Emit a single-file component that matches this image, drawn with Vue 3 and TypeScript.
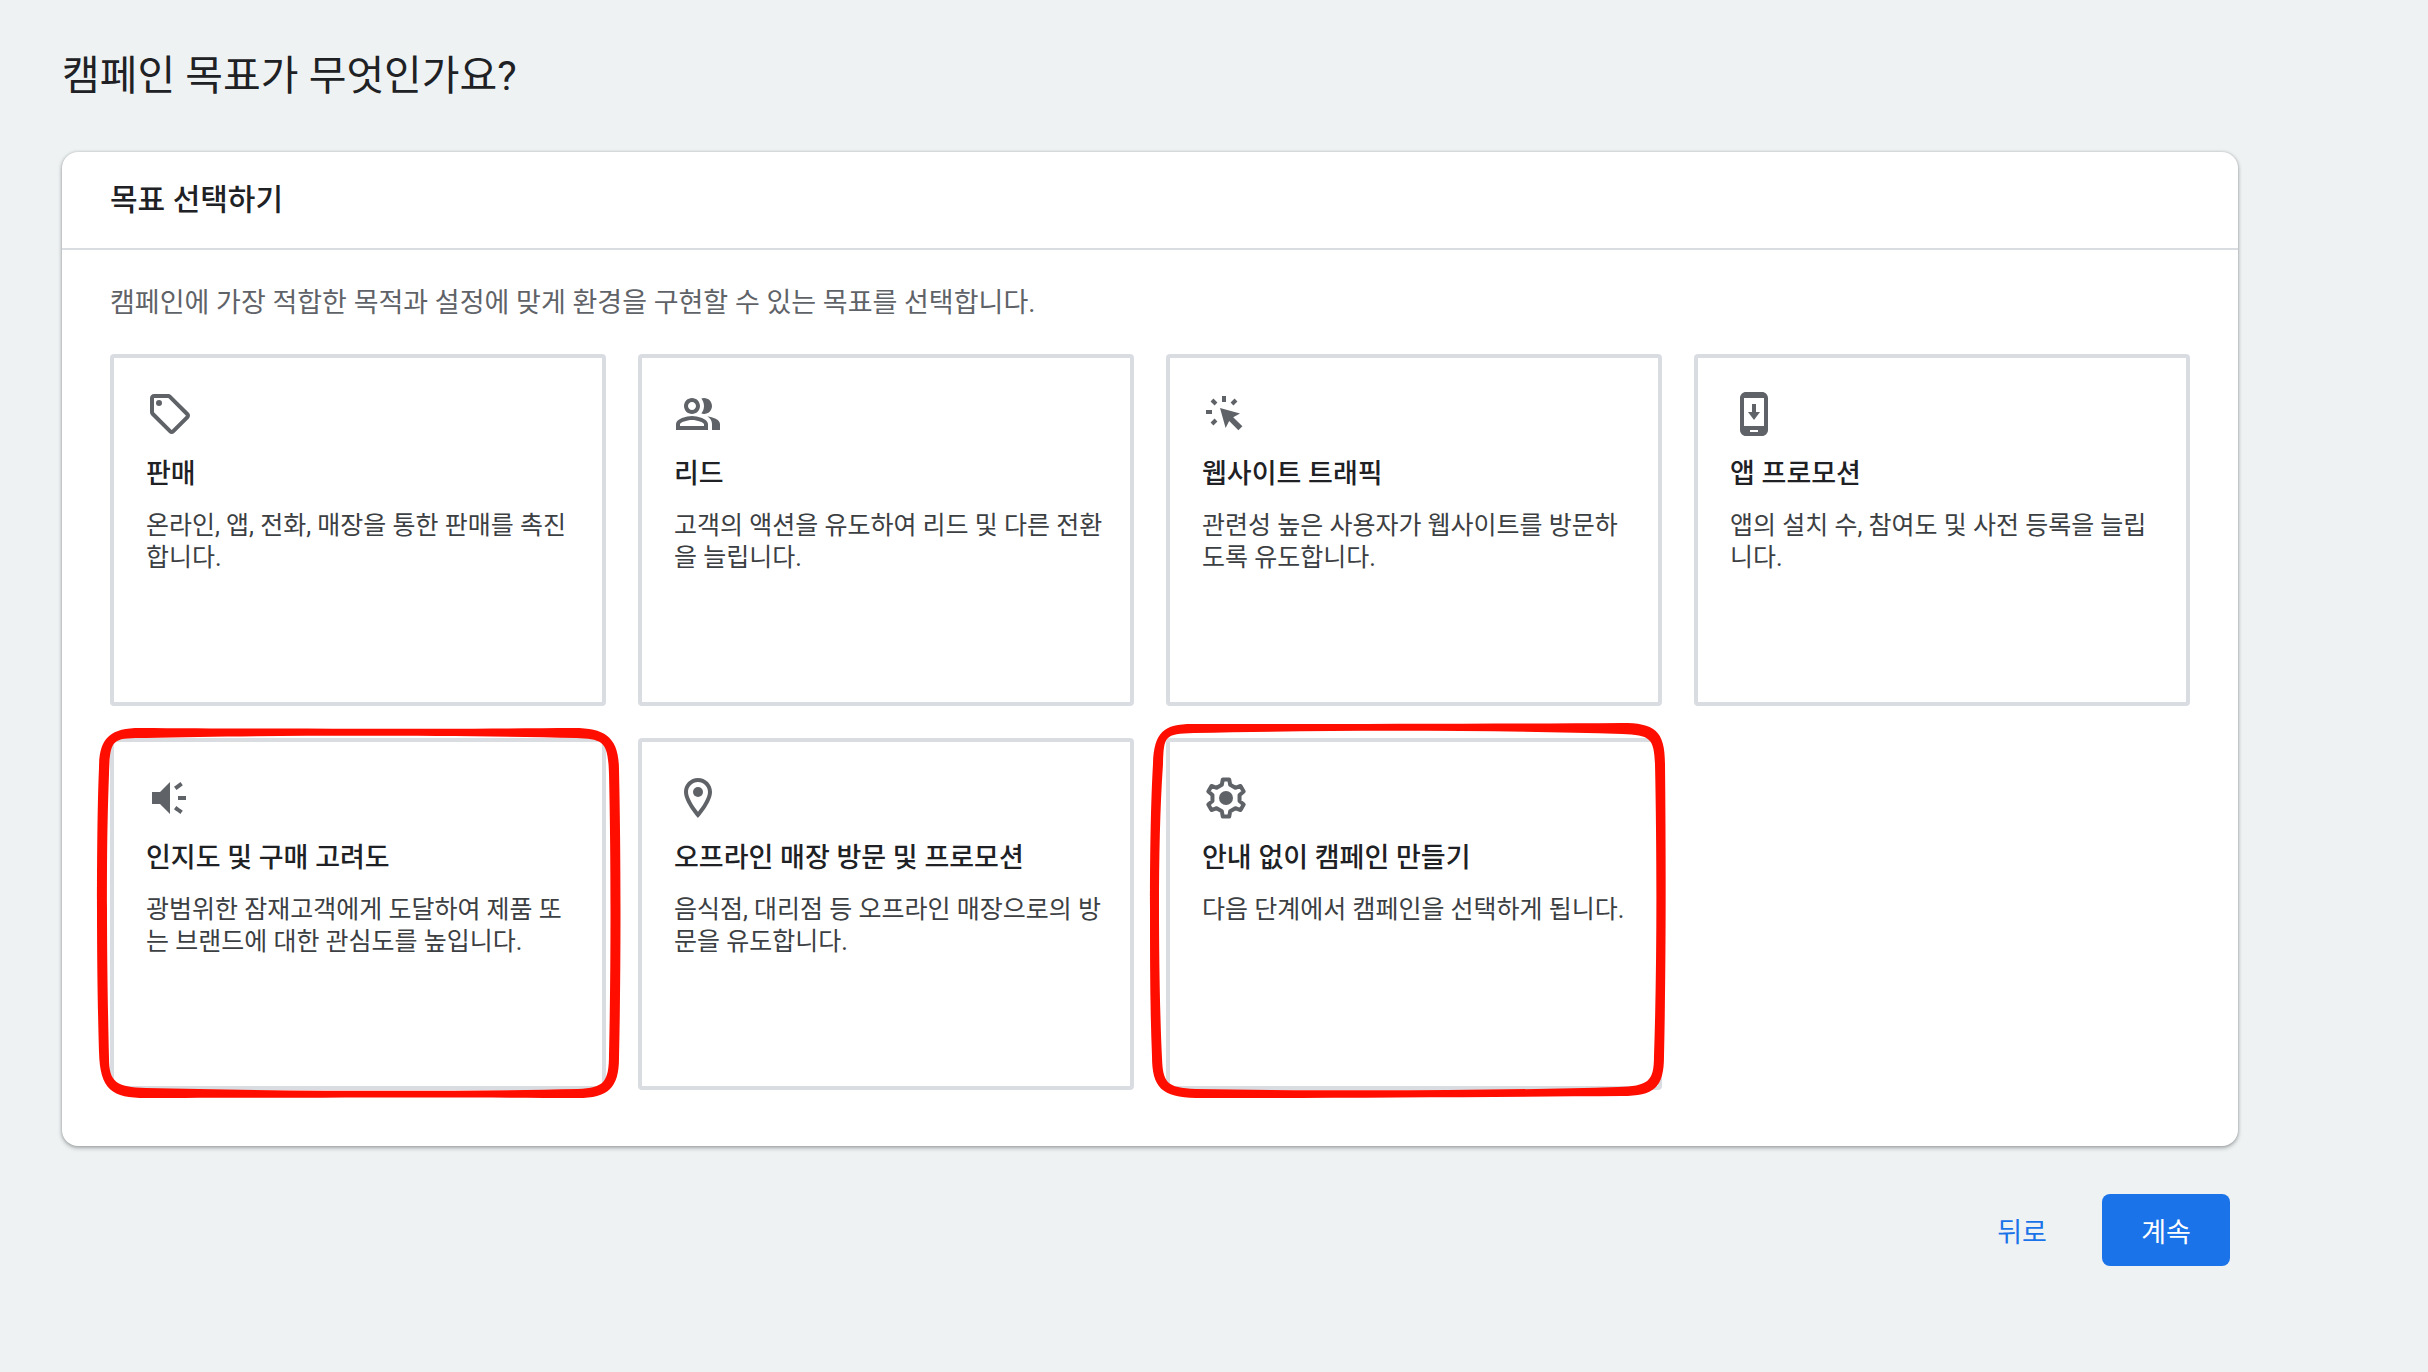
<script setup lang="ts">
import { ref } from 'vue'

interface Goal {
  id: string
  title: string
  description: string
  icon: string
  mark?: string
}

// Hand-drawn marker frames, laid over the recommended goals.
const awarenessMark =
  'M7 190C7 120 8 70 9 50C9 20 20 10 50 10C180 11 360 11 484 10C516 10 529 20 529 52C531 140 531 250 529 340C529 370 518 380 488 380C360 379 180 380 56 380C22 380 10 372 9 334C8 300 7 250 7 190Z' +
  'M17 190C17 240 18 300 19 340C19 364 26 369 56 370C180 373 360 374 488 371C514 370 519 364 519 336C521 250 521 140 519 56C518 24 514 21 486 20C360 17 180 17 56 20C22 20 20 20 19 56C17 110 17 150 17 190Z'
const unguidedMark =
  'M4 190C4 130 5 80 7 46C8 14 18 6 46 6C180 6 350 6 476 5C508 5 519 12 519 46C520 140 520 250 518 338C518 370 508 378 476 378C340 379 180 380 50 380C16 379 6 370 6 338C4 290 4 240 4 190Z' +
  'M13 190C13 240 14 300 16 340C17 364 20 370 50 371C180 373 340 373 472 369C502 368 508 364 508 338C511 250 511 140 509 46C508 20 504 17 476 16C350 12 180 12 48 15C18 16 18 18 17 46C14 90 13 140 13 190Z'

const goals: Goal[] = [
  { id: 'sales', title: '판매', description: '온라인, 앱, 전화, 매장을 통한 판매를 촉진합니다.', icon: 'tag' },
  { id: 'leads', title: '리드', description: '고객의 액션을 유도하여 리드 및 다른 전환을 늘립니다.', icon: 'people' },
  { id: 'traffic', title: '웹사이트 트래픽', description: '관련성 높은 사용자가 웹사이트를 방문하도록 유도합니다.', icon: 'click' },
  { id: 'app', title: '앱 프로모션', description: '앱의 설치 수, 참여도 및 사전 등록을 늘립니다.', icon: 'phone' },
  { id: 'awareness', title: '인지도 및 구매 고려도', description: '광범위한 잠재고객에게 도달하여 제품 또는 브랜드에 대한 관심도를 높입니다.', icon: 'speaker', mark: awarenessMark },
  { id: 'local', title: '오프라인 매장 방문 및 프로모션', description: '음식점, 대리점 등 오프라인 매장으로의 방문을 유도합니다.', icon: 'pin' },
  { id: 'unguided', title: '안내 없이 캠페인 만들기', description: '다음 단계에서 캠페인을 선택하게 됩니다.', icon: 'gear', mark: unguidedMark },
]

const selected = ref<string | null>(null)
</script>

<template>
  <main class="page">
    <h1 class="page-title">캠페인 목표가 무엇인가요?</h1>

    <section class="panel" aria-labelledby="panel-title">
      <header class="panel-header">
        <h2 id="panel-title" class="panel-title">목표 선택하기</h2>
      </header>
      <div class="panel-body">
        <p class="intro">캠페인에 가장 적합한 목적과 설정에 맞게 환경을 구현할 수 있는 목표를 선택합니다.</p>
        <div class="goals">
          <button
            v-for="goal in goals"
            :key="goal.id"
            type="button"
            class="goal"
            :aria-pressed="selected === goal.id"
            @click="selected = goal.id"
          >
            <svg class="icon" viewBox="0 0 24 24" aria-hidden="true">
              <template v-if="goal.icon === 'tag'">
                <path d="M21.41 11.41l-8.83-8.83C12.21 2.21 11.7 2 11.17 2H4C2.9 2 2 2.9 2 4v7.17c0 .53.21 1.04.59 1.41l8.83 8.83c.78.78 2.05.78 2.83 0l7.17-7.17c.78-.78.78-2.04-.01-2.83zM12.83 20L4 11.17V4h7.17L20 12.83 12.83 20z" />
                <circle cx="6.5" cy="6.5" r="1.5" />
              </template>
              <template v-else-if="goal.icon === 'people'">
                <path fill-rule="evenodd" d="M9 12c2.21 0 4-1.79 4-4s-1.79-4-4-4-4 1.79-4 4 1.79 4 4 4zm0-6c1.1 0 2 .9 2 2s-.9 2-2 2-2-.9-2-2 .9-2 2-2zM9 13c-2.67 0-8 1.34-8 4v3h16v-3c0-2.66-5.33-4-8-4zm6 5H3v-.99C3.2 16.29 6.3 15 9 15s5.8 1.29 6 2v1z" />
                <path d="M15 12c2.21 0 4-1.79 4-4s-1.79-4-4-4c-.47 0-.91.1-1.33.24C14.5 5.27 15 6.58 15 8s-.5 2.73-1.33 3.76c.42.14.86.24 1.33.24zM16.67 13.13C18.04 14.06 19 15.32 19 17v3h4v-3c0-2.18-3.58-3.47-6.33-3.87z" />
              </template>
              <template v-else-if="goal.icon === 'click'">
                <path d="M9 9l10 2.8-3.4 1.8 4.6 4.5-2 2-4.6-4.6L11.8 19z" />
                <path class="line" d="M11 3v3M2 11h3M5 5l2 2M17 5l-2 2M5 17l2-2" />
              </template>
              <template v-else-if="goal.icon === 'phone'">
                <path fill-rule="evenodd" d="M8 1h8c1.66 0 3 1.34 3 3v16c0 1.66-1.34 3-3 3H8c-1.66 0-3-1.34-3-3V4c0-1.66 1.34-3 3-3zM7 4v14h10V4zM10 20v1h4v-1z" />
                <path d="M11 7h2v4h2l-3 4-3-4h2z" />
              </template>
              <template v-else-if="goal.icon === 'speaker'">
                <path d="M3 9v6h4l5 5V4L7 9zM16 11v2h4v-2zM14 17.61c.96.71 2.21 1.65 3.2 2.39.4-.53.8-1.07 1.2-1.6-.99-.74-2.24-1.68-3.2-2.4-.4.54-.8 1.08-1.2 1.61zM18.4 5.6c-.4-.53-.8-1.07-1.2-1.6-.99.74-2.24 1.68-3.2 2.4.4.53.8 1.07 1.2 1.6.96-.72 2.21-1.65 3.2-2.4z" />
              </template>
              <template v-else-if="goal.icon === 'pin'">
                <path fill-rule="evenodd" d="M12 2C8.13 2 5 5.13 5 9c0 5.25 7 13 7 13s7-7.75 7-13c0-3.87-3.13-7-7-7zM7 9c0-2.76 2.24-5 5-5s5 2.24 5 5c0 2.88-2.88 7.19-5 9.88C9.92 16.21 7 11.85 7 9z" />
                <circle cx="12" cy="9" r="2.5" />
              </template>
              <g v-else transform="translate(12 12)">
                <path
                  class="line round"
                  d="M-1.6-9.3L1.6-9.3 2.1-6.6 4.67-5.12 7.25-6.04 8.85-3.26 6.77-1.48 6.77 1.48 8.85 3.26 7.25 6.04 4.67 5.12 2.1 6.6 1.6 9.3-1.6 9.3-2.1 6.6-4.67 5.12-7.25 6.04-8.85 3.26-6.77 1.48-6.77-1.48-8.85-3.26-7.25-6.04-4.67-5.12-2.1-6.6Z"
                />
                <circle r="3.5" />
              </g>
            </svg>
            <span class="goal-title">{{ goal.title }}</span>
            <span class="goal-text">{{ goal.description }}</span>
            <svg v-if="goal.mark" class="mark" viewBox="0 0 536 392" preserveAspectRatio="none" aria-hidden="true">
              <path fill-rule="evenodd" :d="goal.mark" />
            </svg>
          </button>
        </div>
      </div>
    </section>

    <footer class="actions">
      <button type="button" class="action">뒤로</button>
      <button type="button" class="action primary">계속</button>
    </footer>
  </main>
</template>

<style>
body {
  margin: 0;
  background: #eef2f3;
}
</style>

<style scoped>
.page {
  padding: 46px 190px 106px 62px;
  font-family: Roboto, "Noto Sans CJK KR", sans-serif;
  color: #202124;
}

.page-title {
  margin: 0 0 46px;
  font-size: 41px;
  line-height: 60px;
  font-weight: 400;
}

.panel {
  border-radius: 16px;
  background: #fff;
  box-shadow: 0 2px 4px rgba(60, 64, 67, 0.4), 0 0 3px rgba(60, 64, 67, 0.25);
}

.panel-header {
  padding: 26px 48px;
  border-bottom: 2px solid #d9dde1;
}

.panel-title {
  margin: 0;
  font-size: 30px;
  line-height: 44px;
  font-weight: 500;
}

.panel-body {
  padding: 33px 48px 56px;
}

.intro {
  margin: 0 0 31px;
  color: #5f6368;
  font-size: 27px;
  line-height: 40px;
}

.goals {
  display: grid;
  grid-template-columns: repeat(4, 1fr);
  gap: 32px;
}

.goal {
  position: relative;
  display: flex;
  flex-direction: column;
  align-items: flex-start;
  min-height: 352px;
  padding: 32px 24px 32px 32px;
  border: 4px solid #d9dde1;
  border-radius: 4px;
  background: #fff;
  color: #202124;
  font-family: inherit;
  text-align: left;
  cursor: pointer;
}

.icon {
  width: 48px;
  height: 48px;
  margin-bottom: 16px;
  fill: #5f6368;
}

.line {
  fill: none;
  stroke: #5f6368;
  stroke-width: 2;
}

.round {
  stroke-linejoin: round;
}

.goal-title {
  margin-bottom: 16px;
  font-size: 27px;
  line-height: 40px;
  font-weight: 500;
}

.goal-text {
  color: #3c4043;
  font-size: 25px;
  line-height: 32px;
}

.mark {
  position: absolute;
  top: -24px;
  left: -24px;
  width: calc(100% + 48px);
  height: calc(100% + 48px);
  fill: #ff0e00;
  pointer-events: none;
}

.actions {
  display: flex;
  justify-content: flex-end;
  gap: 24px;
  padding: 48px 8px 0 0;
}

.action {
  min-width: 112px;
  height: 72px;
  padding: 0 24px;
  border: 0;
  border-radius: 8px;
  background: transparent;
  color: #1a73e8;
  font-family: inherit;
  font-size: 27px;
  font-weight: 400;
  cursor: pointer;
}

.primary {
  min-width: 128px;
  background: #1a73e8;
  color: #fff;
}
</style>
